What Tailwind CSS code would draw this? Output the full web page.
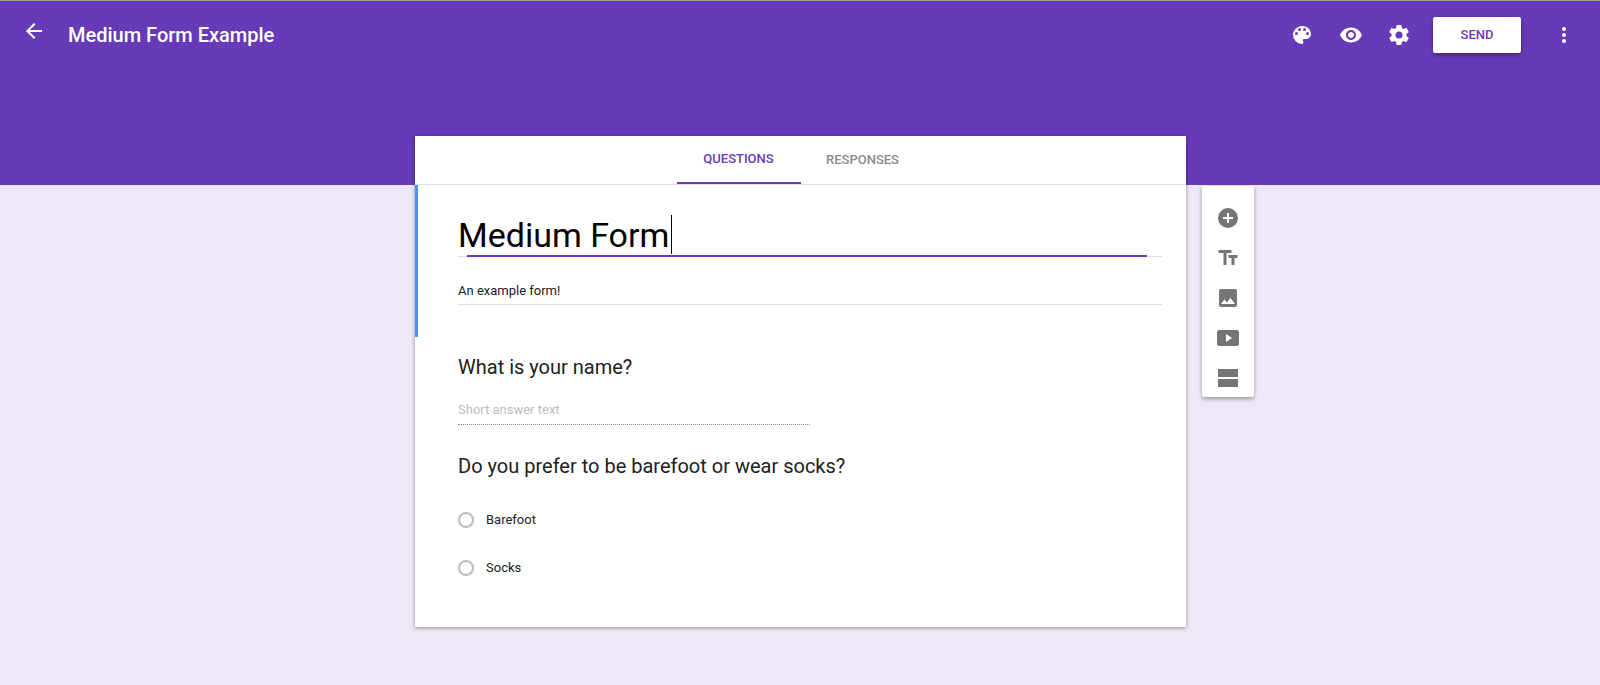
<!doctype html>
<html><head><meta charset="utf-8"><title>Medium Form</title>
<script src="https://cdn.jsdelivr.net/npm/@tailwindcss/browser@4"></script></head>
<body class="bg-[#ede7f6] h-[685px] overflow-hidden font-['Roboto',sans-serif]">
<header class="h-[185px] bg-[#673ab7] border-t border-[#9e9e9e] flex items-start pt-[16px] text-white">
  <svg class="w-[24px] h-[24px] ml-[22px] mt-[2px] fill-white" viewBox="0 0 24 24"><path d="M20 11H7.83l5.59-5.59L12 4l-8 8 8 8 1.41-1.41L7.83 13H20v-2z"/></svg>
  <h1 class="ml-[22px] text-[20px] leading-[36px] font-medium">Medium Form Example</h1>
  <div class="ml-auto flex items-center">
    <svg class="w-[24px] h-[24px] fill-white" viewBox="0 0 24 24"><path d="M12 3a9 9 0 0 0 0 18c.83 0 1.5-.67 1.5-1.5 0-.39-.15-.74-.39-1.01-.23-.26-.38-.61-.38-.99 0-.83.67-1.5 1.5-1.5H16c2.76 0 5-2.24 5-5 0-4.42-4.03-8-9-8zm-5.5 9a1.5 1.5 0 1 1 0-3 1.5 1.5 0 0 1 0 3zm3-4a1.5 1.5 0 1 1 0-3 1.5 1.5 0 0 1 0 3zm5 0a1.5 1.5 0 1 1 0-3 1.5 1.5 0 0 1 0 3zm3 4a1.5 1.5 0 1 1 0-3 1.5 1.5 0 0 1 0 3z"/></svg>
    <svg class="w-[24px] h-[24px] ml-[25px] fill-white" viewBox="0 0 24 24"><path d="M12 4.5C7 4.5 2.73 7.61 1 12c1.73 4.39 6 7.5 11 7.5s9.27-3.11 11-7.5c-1.73-4.39-6-7.5-11-7.5zM12 17c-2.76 0-5-2.24-5-5s2.24-5 5-5 5 2.24 5 5-2.24 5-5 5zm0-8c-1.66 0-3 1.34-3 3s1.34 3 3 3 3-1.34 3-3-1.34-3-3-3z"/></svg>
    <svg class="w-[24px] h-[24px] ml-[24px] fill-white" viewBox="0 0 24 24"><path d="M19.43 12.98c.04-.32.07-.64.07-.98s-.03-.66-.07-.98l2.11-1.65c.19-.15.24-.42.12-.64l-2-3.46c-.12-.22-.39-.3-.61-.22l-2.49 1c-.52-.4-1.08-.73-1.69-.98l-.38-2.65A.49.49 0 0 0 14 2h-4c-.25 0-.46.18-.49.42l-.38 2.65c-.61.25-1.17.59-1.69.98l-2.49-1c-.23-.09-.49 0-.61.22l-2 3.46c-.13.22-.07.49.12.64l2.11 1.65c-.04.32-.07.65-.07.98s.03.66.07.98l-2.11 1.65c-.19.15-.24.42-.12.64l2 3.46c.12.22.39.3.61.22l2.49-1c.52.4 1.08.73 1.69.98l.38 2.65c.03.24.24.42.49.42h4c.25 0 .46-.18.49-.42l.38-2.65c.61-.25 1.17-.59 1.69-.98l2.49 1c.23.09.49 0 .61-.22l2-3.46c.12-.22.07-.49-.12-.64l-2.11-1.65zM12 15.5a3.5 3.5 0 1 1 0-7 3.5 3.5 0 0 1 0 7z"/></svg>
    <button class="ml-[22px] w-[88px] h-[36px] bg-white rounded-[2px] text-[#673ab7] text-[13px] font-medium shadow-[0_2px_4px_rgba(0,0,0,0.35)]">SEND</button>
    <svg class="w-[24px] h-[24px] ml-[31px] mr-[24px] fill-white" viewBox="0 0 24 24"><path d="M12 8a2 2 0 1 0 0-4 2 2 0 0 0 0 4zm0 2a2 2 0 1 0 0 4 2 2 0 0 0 0-4zm0 6a2 2 0 1 0 0 4 2 2 0 0 0 0-4z"/></svg>
  </div>
</header>
<main class="-mt-[49px] pl-[415px] flex items-start">
  <section class="w-[771px] h-[491px] bg-white shadow-[0_1px_4px_rgba(0,0,0,0.4)] flex flex-col">
    <nav class="h-[49px] shrink-0 flex justify-center border-b border-[#e0e0e0] text-[13px] font-medium pl-[0px]">
      <div class="w-[124px] h-[48px] border-b-[2px] border-[#673ab7] text-[#673ab7] flex items-center justify-center">QUESTIONS</div>
      <div class="w-[124px] h-[48px] text-[#8a8a8a] flex items-center justify-center">RESPONSES</div>
    </nav>
    <div class="h-[152px] shrink-0 border-l-[3px] border-[#4d90fe] pl-[40px] pr-[24px]">
      <div class="relative h-[72px] border-b border-[#e0e0e0] text-[34px] leading-[40px] text-black pt-[30px]">
        <span class="relative">Medium Form<span class="absolute -right-[3px] top-0 w-px h-[39px] bg-black"></span></span>
        <span class="absolute left-[9px] right-[15px] -bottom-px h-[2px] bg-[#673ab7]"></span>
      </div>
      <div class="h-[48px] border-b border-[#e0e0e0] pt-[24px] text-[13px] leading-[20px] text-[#212121]">An example form!</div>
    </div>
    <div class="pl-[43px]">
      <h2 class="mt-[16px] text-[20px] leading-[28px] text-[#212121]">What is your name?</h2>
      <div class="mt-[19px] w-[352px] h-[25px] border-b border-dotted border-[#8a8a8a] text-[13px] leading-[20px] text-[#bdbdbd]">Short answer text</div>
      <h2 class="mt-[27px] text-[20px] leading-[28px] text-[#212121]">Do you prefer to be barefoot or wear socks?</h2>
      <div class="mt-[16px] h-[48px] flex items-center text-[13px] text-[#212121]"><span class="w-[16px] h-[16px] rounded-full border-2 border-[#bdbdbd] mr-[12px]"></span>Barefoot</div>
      <div class="h-[48px] flex items-center text-[13px] text-[#212121]"><span class="w-[16px] h-[16px] rounded-full border-2 border-[#bdbdbd] mr-[12px]"></span>Socks</div>
    </div>
  </section>
  <aside class="ml-[16px] mt-[50px] w-[52px] h-[211px] bg-white rounded-[2px] shadow-[0_2px_4px_rgba(0,0,0,0.35)] flex flex-col items-center pt-[20px] gap-[16px]">
    <svg class="w-[24px] h-[24px] fill-[#757575]" viewBox="0 0 24 24"><path d="M12 2a10 10 0 1 0 0 20 10 10 0 0 0 0-20zm5 11h-4v4h-2v-4H7v-2h4V7h2v4h4v2z"/></svg>
    <svg class="w-[24px] h-[24px] fill-[#757575]" viewBox="0 0 24 24"><path d="M2.5 4v3h5v12h3V7h5V4h-13zm19 5h-9v3h3v7h3v-7h3V9z"/></svg>
    <svg class="w-[24px] h-[24px] fill-[#757575]" viewBox="0 0 24 24"><path d="M21 19V5a2 2 0 0 0-2-2H5a2 2 0 0 0-2 2v14c0 1.1.9 2 2 2h14a2 2 0 0 0 2-2zM8.5 13.5l2.5 3.01L14.5 12l4.5 6H5l3.5-4.5z"/></svg>
    <svg class="w-[24px] h-[24px] fill-[#757575]" viewBox="0 0 24 24"><path d="M21 4H3a2 2 0 0 0-2 2v12c0 1.1.9 2 2 2h18a2 2 0 0 0 2-2V6a2 2 0 0 0-2-2zm-11 12V8l6 4-6 4z"/></svg>
    <svg class="w-[24px] h-[24px] fill-[#757575]" viewBox="0 0 24 24"><path d="M2 3h20v8H2zM2 13h20v8H2z" /></svg>
  </aside>
</main>
</body></html>
